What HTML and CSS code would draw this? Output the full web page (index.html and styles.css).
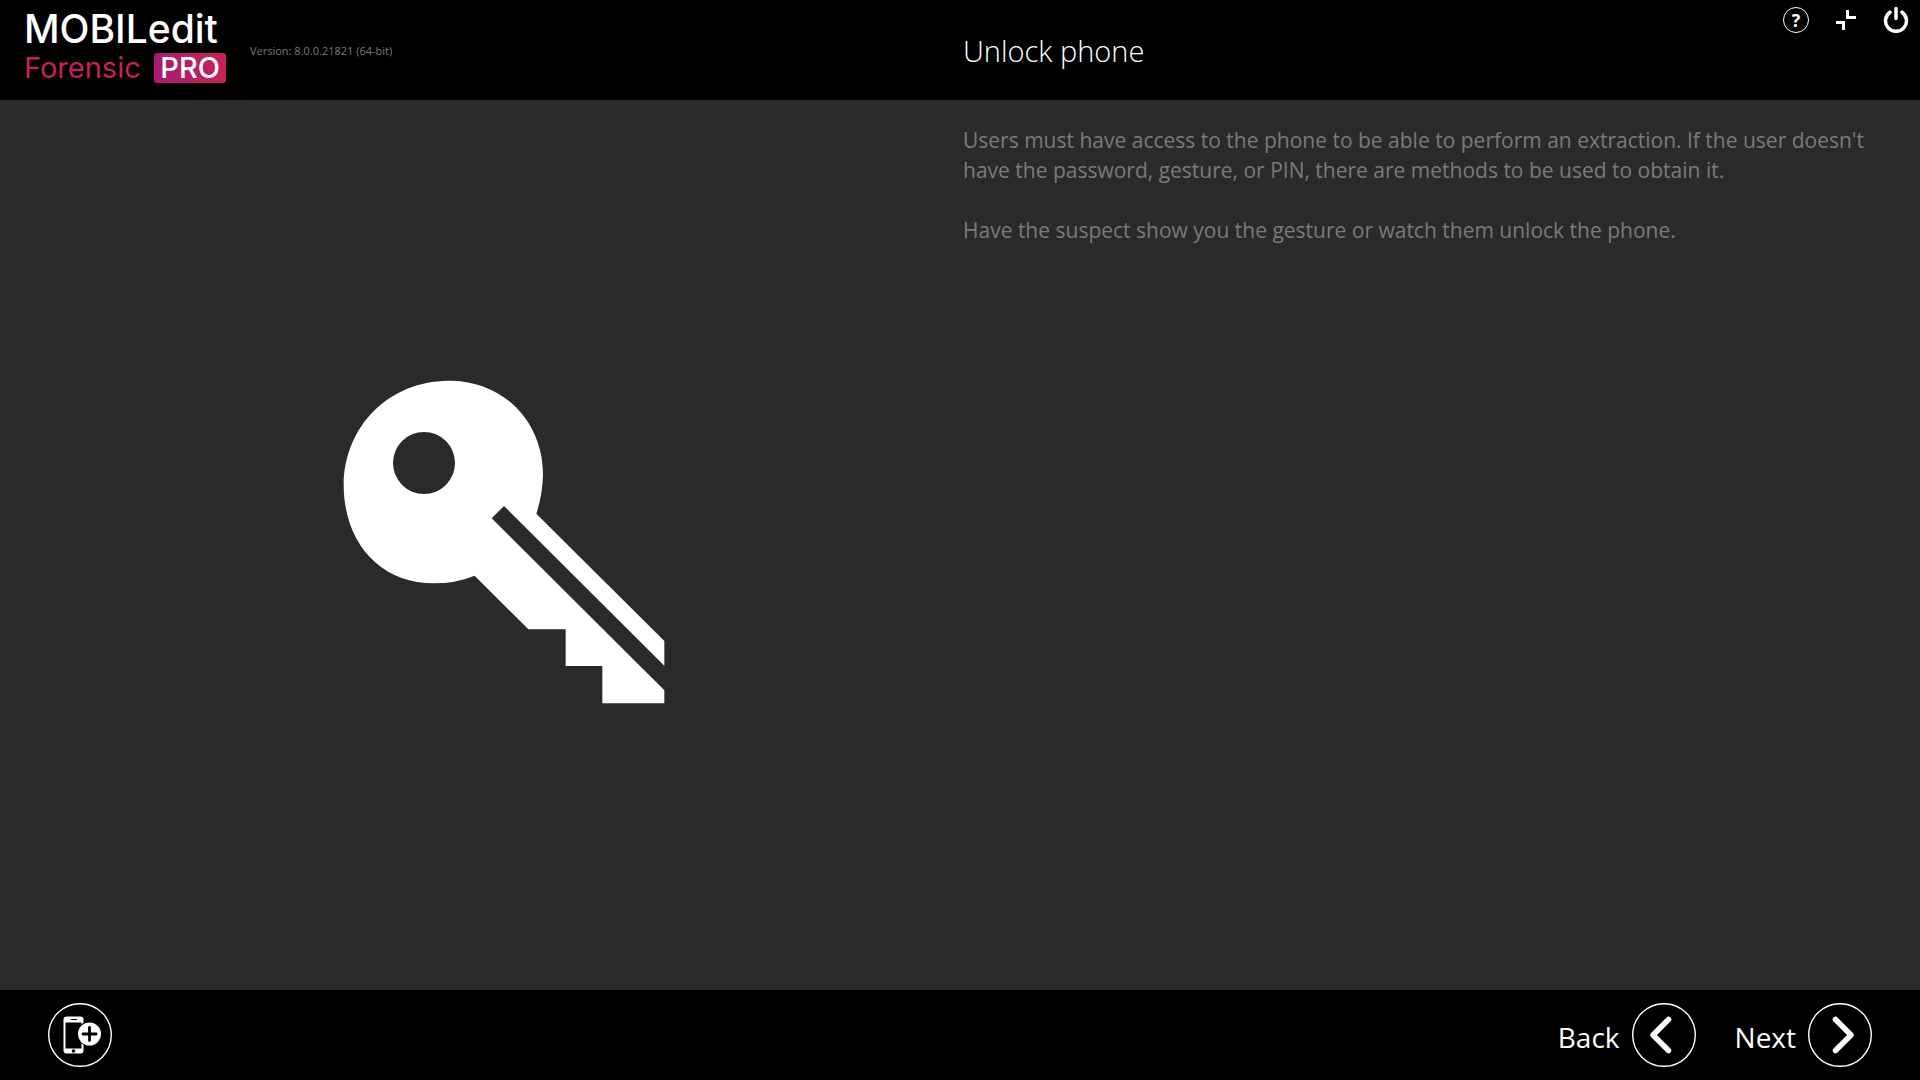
FILE: index.html
```
<!DOCTYPE html>
<html lang="en">
<head>
  <meta charset="UTF-8" />
  <meta name="viewport" content="width=device-width, initial-scale=1.0"/>
  <title>MOBILedit Forensic PRO</title>
  <link rel="stylesheet" href="styles.css">
</head>
<body>
  <header class="top-bar">
    <div class="brand">
      <div class="logo">
        <div class="logo-name">MOBILedit</div>
        <div class="logo-edition">Forensic<span class="logo-pro">PRO</span></div>
      </div>
      <span class="version">Version: 8.0.0.21821 (64-bit)</span>
    </div>

    <h1 class="page-title">Unlock phone</h1>

    <!-- Window controls -->
    <div class="window-controls">
      <button class="icon-button help-button" aria-label="Help">?</button>
      <button class="icon-button" aria-label="Exit full screen">
        <svg width="26" height="26" viewBox="0 0 26 26" fill="none" stroke="#fff" stroke-width="3">
          <path d="M14.500 3V10.500H23M3 15.500H10.500V23"/>
        </svg>
      </button>
      <button class="icon-button" aria-label="Quit">
        <svg width="26" height="26" viewBox="0 0 26 26" fill="none" stroke="#fff" stroke-width="3.500" stroke-linecap="round">
          <path d="M13 1.500V11.500M7 5.200A10.500 10.500 0 1 0 19 5.200"/>
        </svg>
      </button>
    </div>
  </header>

  <main class="content">
    <div class="picture">
      <svg class="key" viewBox="70 61 966 972">
        <path fill="#fff" fill-rule="evenodd" d="M386 63C548 61 670 184 670 344Q669 404 650 462L1034 844V918L553 439L516 476L1034 992V1031H848V919H738V809H626L465 648Q408 671 343 671C180 671 72 548 72 375C75 200 205 65 386 63ZM313 217A93 93 0 1 0 313 403A93 93 0 1 0 313 217Z"/>
      </svg>
    </div>

    <div class="description">
      <p>Users must have access to the phone to be able to perform an extraction. If the user doesn't have the password, gesture, or PIN, there are methods to be used to obtain it.</p>
      <p>Have the suspect show you the gesture or watch them unlock the phone.</p>
    </div>
  </main>

  <footer class="bottom-bar">
    <button class="nav-button" aria-label="Add phone">
      <svg class="circle-icon" viewBox="0 0 64 64" fill="none">
        <circle cx="32" cy="32" r="31.300" stroke="#fff" stroke-width="1.400"/>
        <rect x="15.500" y="13.500" width="20" height="37" rx="3" fill="#fff"/>
        <path d="M17.500 19.500H33.500V45.500H17.500Z" fill="#000"/>
        <path d="M23.500 16.500H28.500" stroke="#000" stroke-width="1.200" stroke-linecap="round"/>
        <circle cx="25.500" cy="48" r="1.800" fill="#000"/>
        <circle cx="41.500" cy="31" r="12.500" fill="#000"/>
        <circle cx="41.500" cy="31" r="11.500" fill="#fff"/>
        <path d="M41.500 24.500V37.500M35 31H48" stroke="#000" stroke-width="2.800" stroke-linecap="round"/>
      </svg>
    </button>

    <nav class="steps">
      <button class="nav-button">
        <span class="nav-label">Back</span>
        <svg class="circle-icon" viewBox="0 0 64 64" fill="none" stroke="#fff">
          <circle cx="32" cy="32" r="31.300" stroke-width="1.400"/>
          <path d="M36.500 16.500L21 32L36.500 47.500" stroke-width="5.500" stroke-linecap="round" stroke-linejoin="round"/>
        </svg>
      </button>
      <button class="nav-button">
        <span class="nav-label">Next</span>
        <svg class="circle-icon" viewBox="0 0 64 64" fill="none" stroke="#fff">
          <circle cx="32" cy="32" r="31.300" stroke-width="1.400"/>
          <path d="M27.500 16.500L43 32L27.500 47.500" stroke-width="5.500" stroke-linecap="round" stroke-linejoin="round"/>
        </svg>
      </button>
    </nav>
  </footer>
</body>
</html>
```
FILE: styles.css
```
* {
  box-sizing: border-box;
}

body {
  font-family: "Open Sans", "Noto Sans", sans-serif;
  margin: 0;
  min-height: 100vh;
  display: flex;
  flex-direction: column;
  background: #2a2a2a;
  color: #fff;
}

button {
  font-family: inherit;
  color: inherit;
  background: none;
  border: none;
  padding: 0;
  cursor: pointer;
}

svg {
  display: block;
}

/* Top bar */
.top-bar {
  display: grid;
  grid-template-columns: 1fr 1fr;
  align-items: center;
  height: 100px;
  background: #000;
  position: relative;
}

.brand {
  display: flex;
  align-items: center;
  gap: 24px;
  padding-left: 24px;
}

.logo {
  width: 202px;
  font-family: Inter, sans-serif;
  padding-bottom: 7px;
}

.logo-name {
  font-size: 39px;
  line-height: 38px;
  font-weight: 500;
  margin-bottom: 5px;
}

.logo-edition {
  display: flex;
  align-items: center;
  justify-content: space-between;
  font-size: 29px;
  line-height: 30px;
  color: #c2215c;
}

.logo-pro {
  padding: 0 6px;
  border-radius: 3px;
  background: linear-gradient(to right, #a71c6e, #c52456);
  color: #fff;
  font-weight: 500;
}

.version {
  font-size: 11px;
  line-height: 16px;
  padding-top: 2px;
  color: #7a7a7a;
}

.page-title {
  margin: 0;
  padding: 2px 0 0 3px;
  font-size: 29px;
  line-height: 40px;
  font-weight: 300;
}

.window-controls {
  position: absolute;
  top: 7px;
  right: 11px;
  display: flex;
  gap: 24px;
}

.icon-button {
  width: 26px;
  height: 26px;
}

.help-button {
  border: 1px solid #fff;
  border-radius: 50%;
  font-size: 18px;
  line-height: 24px;
  font-weight: 700;
}

/* Page content */
.content {
  flex: 1;
  display: grid;
  grid-template-columns: 1fr 1fr;
}

.picture {
  display: flex;
  align-items: center;
  justify-content: center;
  padding: 0 0 6px 48px;
}

.key {
  width: 322px;
  height: 324px;
}

.description {
  padding: 25px 48px 0 3px;
  font-size: 21px;
  line-height: 30px;
  color: #7a7a7a;
}

.description p {
  margin: 0 0 30px;
}

/* Bottom bar */
.bottom-bar {
  display: flex;
  align-items: center;
  justify-content: space-between;
  height: 90px;
  padding: 0 48px;
  background: #000;
}

.steps {
  display: flex;
  gap: 39px;
}

.nav-button {
  display: flex;
  align-items: center;
  gap: 12px;
}

.nav-label {
  font-size: 28px;
  line-height: 36px;
  padding-top: 4px;
}

.circle-icon {
  width: 64px;
  height: 64px;
}
```
